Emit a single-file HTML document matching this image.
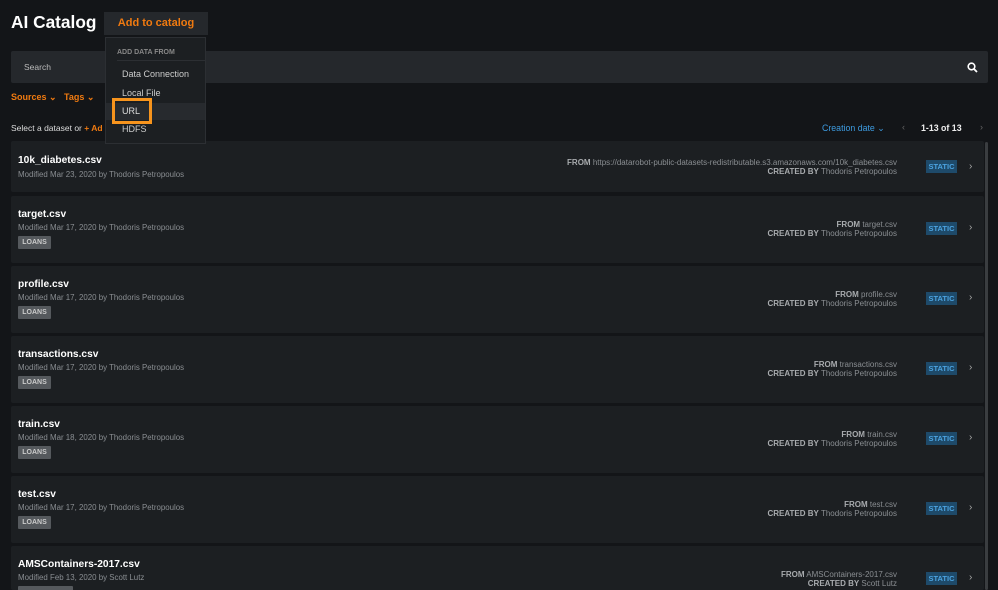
<!DOCTYPE html>
<html style="width:998px;height:590px;overflow:hidden"><head><meta charset="utf-8"><style>
*{margin:0;padding:0;box-sizing:border-box}
body{width:998px;height:590px;overflow:hidden;background:#131518;font-family:"Liberation Sans",sans-serif;position:relative;color:#ddd}
.a{position:absolute}
.card{position:absolute;left:11px;width:973px;background:#1c1f22;border-radius:2px;overflow:hidden}
.t{position:absolute;left:7px;font-size:10.2px;font-weight:bold;color:#fff}
.m{position:absolute;left:7px;font-size:7.9px;color:#8a8e92}
.lo{position:absolute;left:7px;width:33px;height:13px;background:#55595d;color:#ccc;font-size:7px;font-weight:bold;line-height:13px;text-align:center;border-radius:1px}
.r{position:absolute;right:87px;font-size:8px;color:#8a8e92;text-align:right;line-height:9px;white-space:nowrap}
.r b{color:#a8abae}
.st{position:absolute;left:915px;width:31px;height:13px;background:#1e4a6a;color:#4ba3e0;font-size:7.5px;font-weight:bold;line-height:13px;text-align:center}
.ch{position:absolute;left:958px;color:#aaa;font-size:10px}
</style></head><body>
<div class="a" style="left:11px;top:12px;font-size:17.3px;font-weight:bold;color:#fff">AI Catalog</div>
<div class="a" style="left:104px;top:12px;width:104px;height:23px;background:#25282c;color:#f07a10;font-size:11px;font-weight:bold;line-height:23px;text-align:center">Add to catalog</div>
<div class="a" style="left:11px;top:51px;width:977px;height:32px;background:#25282c;border-radius:2px"></div>
<div class="a" style="left:24px;top:62px;font-size:8.5px;color:#bbb">Search</div>
<svg class="a" style="left:967px;top:62px" width="11" height="11" viewBox="0 0 11 11"><circle cx="4.5" cy="4.5" r="3.3" stroke="#fff" stroke-width="1.6" fill="none"/><path d="M7 7l3 3" stroke="#fff" stroke-width="1.8"/></svg>
<div class="a" style="left:11px;top:92px;font-size:9px;font-weight:bold;color:#f07a10">Sources ⌄ &nbsp; Tags ⌄</div>
<div class="a" style="left:11px;top:123px;font-size:8.5px;color:#ddd">Select a dataset or <span style="color:#f07a10;font-weight:bold">+ Ad</span></div>
<div class="a" style="left:822px;top:123px;font-size:8.8px;color:#3d9be0">Creation date ⌄</div>
<div class="a" style="left:902px;top:122px;font-size:9px;color:#666">‹</div>
<div class="a" style="left:921px;top:123px;font-size:8.8px;font-weight:bold;color:#eee">1-13 of 13</div>
<div class="a" style="left:980px;top:122px;font-size:9px;color:#666">›</div>
<div class="a" style="left:985px;top:142px;width:3px;height:448px;background:#3a3d40;border-radius:2px"></div>

<div class="card" style="top:141px;height:51px"><div class="t" style="top:14px">10k_diabetes.csv</div><div class="m" style="top:29px">Modified Mar 23, 2020 by Thodoris Petropoulos</div><div class="r" style="top:17px"><b>FROM</b> https://datarobot-public-datasets-redistributable.s3.amazonaws.com/10k_diabetes.csv<br><b>CREATED BY</b> Thodoris Petropoulos</div><div class="st" style="top:19px">STATIC</div><div class="ch" style="top:20px">›</div></div>

<div class="card" style="top:196px;height:67px"><div class="t" style="top:13px">target.csv</div><div class="m" style="top:27px">Modified Mar 17, 2020 by Thodoris Petropoulos</div><div class="lo" style="top:40px">LOANS</div><div class="r" style="top:24px"><b>FROM</b> target.csv<br><b>CREATED BY</b> Thodoris Petropoulos</div><div class="st" style="top:26px">STATIC</div><div class="ch" style="top:26px">›</div></div>

<div class="card" style="top:266px;height:67px"><div class="t" style="top:13px">profile.csv</div><div class="m" style="top:27px">Modified Mar 17, 2020 by Thodoris Petropoulos</div><div class="lo" style="top:40px">LOANS</div><div class="r" style="top:24px"><b>FROM</b> profile.csv<br><b>CREATED BY</b> Thodoris Petropoulos</div><div class="st" style="top:26px">STATIC</div><div class="ch" style="top:26px">›</div></div>

<div class="card" style="top:336px;height:67px"><div class="t" style="top:13px">transactions.csv</div><div class="m" style="top:27px">Modified Mar 17, 2020 by Thodoris Petropoulos</div><div class="lo" style="top:40px">LOANS</div><div class="r" style="top:24px"><b>FROM</b> transactions.csv<br><b>CREATED BY</b> Thodoris Petropoulos</div><div class="st" style="top:26px">STATIC</div><div class="ch" style="top:26px">›</div></div>

<div class="card" style="top:406px;height:67px"><div class="t" style="top:13px">train.csv</div><div class="m" style="top:27px">Modified Mar 18, 2020 by Thodoris Petropoulos</div><div class="lo" style="top:40px">LOANS</div><div class="r" style="top:24px"><b>FROM</b> train.csv<br><b>CREATED BY</b> Thodoris Petropoulos</div><div class="st" style="top:26px">STATIC</div><div class="ch" style="top:26px">›</div></div>

<div class="card" style="top:476px;height:67px"><div class="t" style="top:13px">test.csv</div><div class="m" style="top:27px">Modified Mar 17, 2020 by Thodoris Petropoulos</div><div class="lo" style="top:40px">LOANS</div><div class="r" style="top:24px"><b>FROM</b> test.csv<br><b>CREATED BY</b> Thodoris Petropoulos</div><div class="st" style="top:26px">STATIC</div><div class="ch" style="top:26px">›</div></div>

<div class="card" style="top:546px;height:44px"><div class="t" style="top:13px">AMSContainers-2017.csv</div><div class="m" style="top:27px">Modified Feb 13, 2020 by Scott Lutz</div><div class="lo" style="top:40px;width:55px"></div><div class="r" style="top:24px"><b>FROM</b> AMSContainers-2017.csv<br><b>CREATED BY</b> Scott Lutz</div><div class="st" style="top:26px">STATIC</div><div class="ch" style="top:26px">›</div></div>

<div class="a" style="left:105px;top:37px;width:101px;height:107px;background:#1c1f22;border:1px solid #2c2f33"></div>
<div class="a" style="left:117px;top:49px;font-size:7px;font-weight:bold;color:#888">ADD DATA FROM</div>
<div class="a" style="left:117px;top:60px;width:88px;height:1px;background:#2c2f33"></div>
<div class="a" style="left:106px;top:103px;width:99px;height:17px;background:#272a2e"></div>
<div class="a" style="left:122px;top:69px;font-size:9px;color:#ccc">Data Connection</div>
<div class="a" style="left:122px;top:88px;font-size:9px;color:#ccc">Local File</div>
<div class="a" style="left:122px;top:106px;font-size:9px;color:#ddd">URL</div>
<div class="a" style="left:122px;top:124px;font-size:9px;color:#ccc">HDFS</div>
<div class="a" style="left:112px;top:98px;width:40px;height:26px;border:3px solid #f7941d"></div>
</body></html>
